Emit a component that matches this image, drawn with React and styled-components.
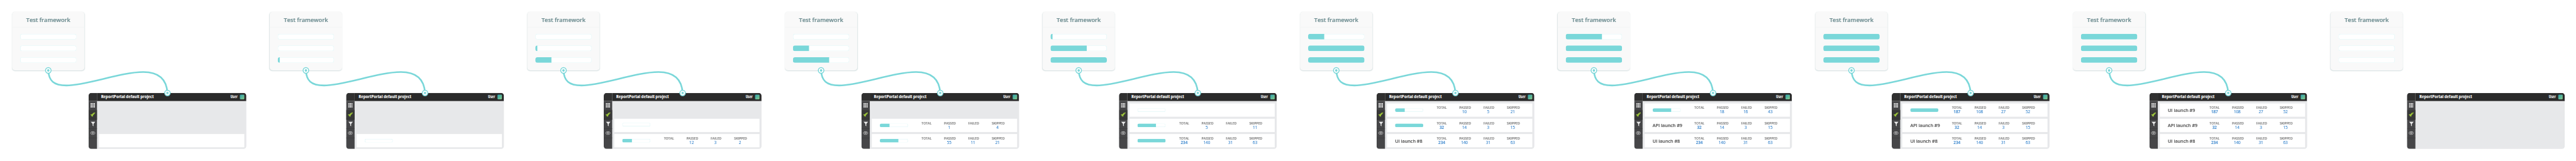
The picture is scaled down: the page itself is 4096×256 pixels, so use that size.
import React from "react";
import styled, { createGlobalStyle } from "styled-components";

const TEAL = "#7ad7d9";

const GlobalStyle = createGlobalStyle`
  html, body { margin: 0; background: #fff; overflow: hidden; }
  *, *::before, *::after { box-sizing: border-box; }
`;

const Viewport = styled.main`
  width: 4096px;
  height: 256px;
  overflow: hidden;
`;

const Strip = styled.div`
  display: flex;
  width: 6400px;
  height: 400px;
  transform: scale(0.64);
  transform-origin: 0 0;
  font-family: "Open Sans", sans-serif;
`;

const Frame = styled.section`
  position: relative;
  display: flex;
  flex-direction: column;
  flex: 0 0 640px;
  height: 400px;
  padding: 29px 28px 30px 30px;
`;

const Card = styled.div`
  width: 180px;
  height: 146px;
  border-radius: 8px;
  background: #f9f9f9;
  box-shadow: 0 1px 2px rgba(60, 110, 115, 0.22);
`;

const CardTitle = styled.h2`
  margin: 0;
  height: 39px;
  border-bottom: 1px solid #f2f3f3;
  color: #6f8e92;
  font-size: 14.4px;
  font-weight: 600;
  -webkit-text-stroke: 0.35px #6f8e92;
  line-height: 39px;
  text-align: center;
  white-space: nowrap;
`;

const CardBody = styled.div`
  display: flex;
  flex-direction: column;
  gap: 15px;
  padding: 16px 20px 0;
`;

const Track = styled.div`
  width: ${(p) => (p.$small ? 70 : 140)}px;
  height: ${(p) => (p.$small ? 9 : 14)}px;
  margin-top: ${(p) => p.$shift || 0}px;
  border-radius: ${(p) => (p.$small ? 4 : 5.5)}px;
  background: #fff;
  box-shadow: inset 0 0 0 1px #e0f6f7;
  overflow: hidden;
`;

const Fill = styled.div`
  width: ${(p) => p.$width}px;
  height: 100%;
  background: ${TEAL};
`;

const Wire = styled.svg`
  position: absolute;
  inset: 0;
  z-index: 1;
`;

const Panel = styled.div`
  display: grid;
  grid-template-columns: 21px 1fr;
  grid-template-rows: 20px 1fr;
  width: 392px;
  height: 139px;
  margin-top: 56px;
  align-self: flex-end;
  border-radius: 7px;
  overflow: hidden;
  background: #e7e8ea;
`;

const Corner = styled.div`
  background: #303030;
`;

const TopBar = styled.header`
  display: flex;
  align-items: flex-start;
  padding: 0 5px 0 10px;
  background: #2a2a2a;
  color: #fff;
  font-weight: 700;
  white-space: nowrap;
`;

const Project = styled.span`
  flex: 1;
  font-size: 12.05px;
  line-height: 17px;
  font-stretch: 75%;
`;

const User = styled.span`
  margin-right: 6px;
  font-size: 10px;
  line-height: 16.4px;
  font-stretch: 75%;
`;

const Avatar = styled.span`
  width: 11px;
  height: 12px;
  margin-top: 4px;
  border-radius: 2px;
  background: linear-gradient(135deg, #2ba5b4, #87c580);
`;

const SideBar = styled.nav`
  background: #464648;
`;

const SideItem = styled.div`
  display: flex;
  align-items: center;
  justify-content: center;
  height: 22.9px;
  border-bottom: 1px solid ${(p) => (p.$active ? "#2b2b2b" : "#3a3a3b")};
  background: ${(p) => (p.$active ? "#383838" : "transparent")};
`;

const Launches = styled.div`
  display: flex;
  flex-direction: column;
  justify-content: flex-end;
  gap: 5px;
  padding: 0 5px 4px;
`;

const Launch = styled.div`
  display: grid;
  grid-template-columns: 87px 58px 58px 60px 62px;
  align-items: center;
  height: 33px;
  padding-left: 20px;
  background: #fff;
`;

const LaunchName = styled.span`
  color: #595959;
  font-size: 11.2px;
  font-weight: 600;
  -webkit-text-stroke: 0.3px #595959;
  line-height: 33px;
  white-space: nowrap;
`;

const Stat = styled.div`
  align-self: start;
  padding-top: 5px;
  text-align: center;
`;

const StatLabel = styled.div`
  color: #777;
  font-size: 8px;
  font-weight: 600;
  -webkit-text-stroke: 0.2px #777;
  line-height: 12px;
`;

const StatValue = styled.div`
  padding-right: ${(p) => (p.$total ? 0 : 3.4)}px;
  color: #458dd0;
  font-size: 9.8px;
  font-weight: ${(p) => (p.$total ? 600 : 400)};
  -webkit-text-stroke: 0.25px #458dd0;
  line-height: 10.4px;
`;

const GridIcon = () => (
  <svg width="11" height="11" viewBox="0 0 11 11" fill="#ececec">
    {[0, 4, 8].map((y) => [0, 4, 8].map((x) => <rect key={`${x}-${y}`} x={x} y={y} width="3" height="3" />))}
  </svg>
);

const RocketIcon = () => (
  <svg width="13" height="12" viewBox="0 0 13 12">
    <path
      fill="#a0c93a"
      d="M12.8 .2C10.3 .1 8.5 .9 7 2.4L4.7 4.8 2.2 5 .1 7.1 2.7 7.2 3.1 8 2.3 9 3.2 9.8 4.4 9.2 5 9.5 5 11.8 7 9.8 7.2 7.4 10.4 4.2C12 2.7 12.8 1.7 12.8 .2Z"
    />
    <circle cx="10.4" cy="2.4" r=".8" fill="#383838" />
  </svg>
);

const FilterIcon = () => (
  <svg width="12" height="12" viewBox="0 0 12 12">
    <path fill="#ececec" d="M.3 .4H11.9L7.3 6V11.7L5.1 10.2V6Z" />
  </svg>
);

const EyeIcon = () => (
  <svg width="13" height="9" viewBox="0 0 13 9" fill="none" stroke="#e6e6e6">
    <path strokeWidth="1.1" d="M.6 4.5C2 1.8 4 .7 6.5 .7S11 1.8 12.4 4.5C11 7.2 9 8.3 6.5 8.3S2 7.2 .6 4.5Z" />
    <circle cx="6.5" cy="4.1" r="2.2" strokeWidth="1.1" />
    <circle cx="6.7" cy="3.7" r=".7" fill="#e6e6e6" stroke="none" />
  </svg>
);

const Knob = ({ x, y }) => (
  <g>
    <circle cx={x} cy={y} r="6.9" fill="#fff" stroke={TEAL} strokeWidth="2.3" />
    <circle cx={x} cy={y} r="3" fill={TEAL} />
  </g>
);

const Connector = () => (
  <Wire width="640" height="400" viewBox="0 0 640 400">
    <path
      d="M120 175C121 200 133 212.3 165 212.3C215 212.3 300 179 356 179C398 179 414 200 416 231"
      fill="none"
      stroke={TEAL}
      strokeWidth="4"
    />
    <Knob x={120} y={175} />
    <Knob x={416} y={231} />
  </Wire>
);

const LABELS = ["TOTAL", "PASSED", "FAILED", "SKIPPED"];

const ui8 = [234, 140, 31, 63];
const api9 = [32, 14, 3, 15];
const ui9 = [187, 108, 27, 52];

const FRAMES = [
  { tests: [0, 0, 0], launches: [{}] },
  { tests: [0, 0, 5], launches: [{ bar: 0 }] },
  { tests: [0, 5, 40], launches: [{ bar: 0, shift: -4 }, { bar: 24, stats: ["", 12, 3, 2] }] },
  { tests: [0, 40, 90], launches: [{ bar: 24, stats: ["", 1, "", 4] }, { bar: 46, stats: ["", 55, 11, 21] }] },
  { tests: [5, 90, 140], launches: [{ bar: 0 }, { bar: 46, stats: ["", 5, "", 11] }, { bar: 70, stats: ui8 }] },
  {
    tests: [40, 140, 140],
    launches: [{ bar: 24, stats: ["", 10, 5, 21] }, { bar: 70, stats: api9 }, { name: "UI launch #8", stats: ui8 }],
  },
  {
    tests: [90, 140, 140],
    launches: [
      { bar: 46, stats: ["", 18, 16, 43] },
      { name: "API launch #9", stats: api9 },
      { name: "UI launch #8", stats: ui8 },
    ],
  },
  {
    tests: [140, 140, 140],
    launches: [
      { bar: 70, stats: ui9 },
      { name: "API launch #9", stats: api9 },
      { name: "UI launch #8", stats: ui8 },
    ],
  },
  {
    tests: [140, 140, 140],
    launches: [
      { name: "UI launch #9", stats: ui9 },
      { name: "API launch #9", stats: api9 },
      { name: "UI launch #8", stats: ui8 },
    ],
  },
  { tests: [0, 0, 0], launches: [], idle: true },
];

const LaunchRow = ({ bar, shift, name, stats }) => (
  <Launch>
    {name && <LaunchName>{name}</LaunchName>}
    {bar !== undefined && (
      <Track $small $shift={shift}>
        <Fill $width={bar} />
      </Track>
    )}
    {stats &&
      LABELS.map((label, i) => (
        <Stat key={label}>
          <StatLabel>{label}</StatLabel>
          <StatValue $total={i === 0}>{stats[i]}</StatValue>
        </Stat>
      ))}
  </Launch>
);

const Scene = ({ tests, launches, idle }) => (
  <Frame>
    <Card>
      <CardTitle>Test framework</CardTitle>
      <CardBody>
        {tests.map((width, i) => (
          <Track key={i}>
            <Fill $width={width} />
          </Track>
        ))}
      </CardBody>
    </Card>
    <Panel>
      <Corner />
      <TopBar>
        <Project>ReportPortal default project</Project>
        <User>User</User>
        <Avatar />
      </TopBar>
      <SideBar>
        <SideItem><GridIcon /></SideItem>
        <SideItem $active><RocketIcon /></SideItem>
        <SideItem><FilterIcon /></SideItem>
        <SideItem><EyeIcon /></SideItem>
      </SideBar>
      <Launches>
        {launches.map((launch, i) => (
          <LaunchRow key={i} {...launch} />
        ))}
      </Launches>
    </Panel>
    {!idle && <Connector />}
  </Frame>
);

export default function App() {
  return (
    <>
      <GlobalStyle />
      <Viewport>
        <Strip>
          {FRAMES.map((frame, i) => (
            <Scene key={i} {...frame} />
          ))}
        </Strip>
      </Viewport>
    </>
  );
}
